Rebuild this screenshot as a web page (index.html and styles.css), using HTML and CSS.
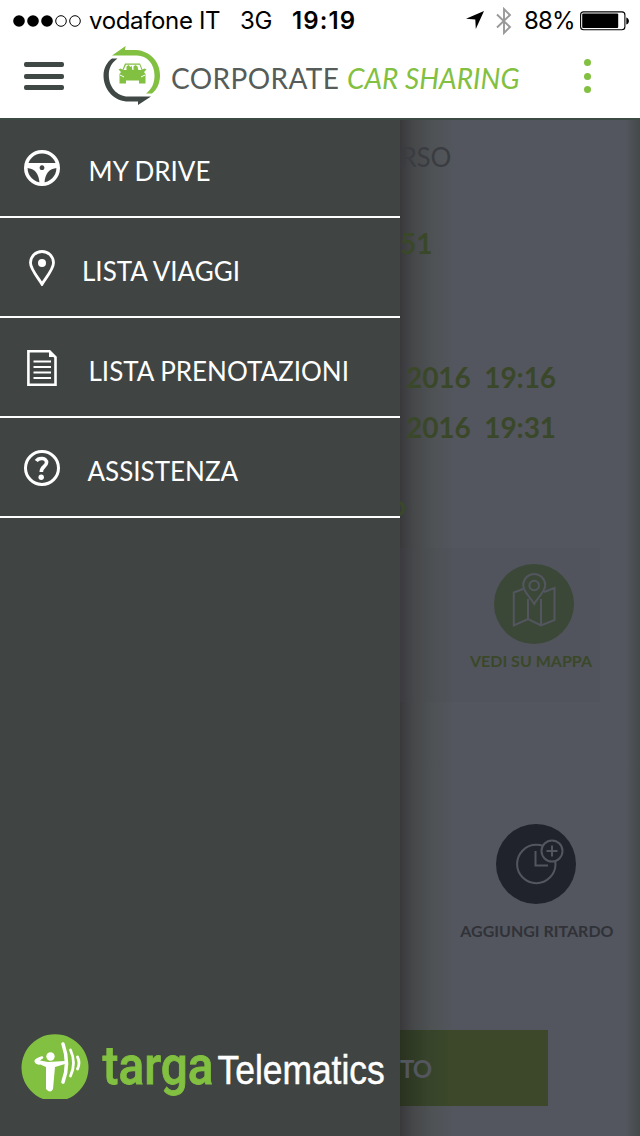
FILE: index.html
```html
<!DOCTYPE html>
<html lang="it">
<head>
    <meta charset="UTF-8">
    <meta name="viewport" content="width=device-width, initial-scale=1.0">
    <title>Corporate Car Sharing</title>
    <link rel="stylesheet" href="styles.css">
</head>
<body>

    <div class="status-bar">
        <svg class="signal" width="68" height="14" viewBox="0 0 68 14">
            <circle cx="6" cy="7" r="5.8"/>
            <circle cx="20" cy="7" r="5.8"/>
            <circle cx="34" cy="7" r="5.8"/>
            <circle cx="48" cy="7" r="5.3" fill="none" stroke="#000"/>
            <circle cx="62" cy="7" r="5.3" fill="none" stroke="#000"/>
        </svg>
        <span class="carrier">vodafone IT</span>
        <span class="network">3G</span>
        <span class="clock">19:19</span>
        <svg class="location" width="18" height="19" viewBox="0 0 18 19">
            <path d="M18 0L9.8 18L9.3 8.4L0 7.7Z"/>
        </svg>
        <svg class="bluetooth" width="16" height="28" viewBox="0 0 16 28">
            <path d="M1 7.5L14 20L8 26V2L14 8L1 20.5" fill="none" stroke="#999" stroke-width="1.9"/>
        </svg>
        <span class="percent">88%</span>
        <svg class="battery" width="50" height="20" viewBox="0 0 50 20">
            <rect x="0.6" y="0.9" width="44.3" height="17.8" rx="3" fill="none" stroke="#000" stroke-width="1.1"/>
            <rect x="2.2" y="2.6" width="36" height="14.4" rx="1"/>
            <path d="M46.3 6.5c3.5 1 3.5 6 0 7z"/>
        </svg>
    </div>

    <header class="top-bar">
        <div class="hamburger"><i></i><i></i><i></i></div>
        <svg class="brand-logo" width="58" height="60" viewBox="0 0 58 60">
            <path d="M9 9.5L22.6 0L22 4H33C48 5 57.500 17 57 30C56.800 38 53.500 44 49 47.500H43C49 43 51.500 37 51.500 29.500C51.500 18 44 9.500 34 9.500Z" fill="#82c041"/>
            <path d="M48 50.500L35 59V55.500H23C10 54 0.500 43 0.500 29.500C0.500 22 4.500 15.500 9 12.500H14.500C8.500 17 5.800 22 5.800 29C5.800 41 14 50.500 25 50.500Z" fill="#404845"/>
            <path d="M22 17.500H37L39.500 23.500 41.500 22.500 43.500 23.500 41 26 42.500 28V37.500H36V34.500H23V37.500H16.500V28L18 26 15.500 23.500 17.500 22.500 19.500 23.500Z" fill="#82c041"/>
            <path d="M23 18.700H36.500L38.500 24H20.500Z" fill="#fff"/>
            <path d="M23.500 24.500V20.500L25.500 19L27.500 21L28.500 19.500L29.500 24.500ZM30.500 24.500V20.500L32.500 19L34.500 20.500L35.500 24.500Z" fill="#82c041"/>
            <path d="M17 29L21 31M42 29L38 31" stroke="#fff"/>
        </svg>
        <h1 class="brand">CORPORATE <em>CAR SHARING</em></h1>
        <div class="more"><i></i><i></i><i></i></div>
    </header>

    <div class="screen">
        <nav class="drawer">
            <ul class="menu">
                <li class="menu-item">
                    <svg width="36" height="36" viewBox="0 0 36 36">
                        <circle cx="18" cy="18" r="16.200" fill="none" stroke="#fff" stroke-width="3.600"/>
                        <path fill="#fff" fill-rule="evenodd" d="M3 13H33V18C25 18.500 21 24 20.500 33H15.500C15 24 11 18.500 3 18ZM18 15.300a2.400 2.400 0 1 0 0.010 0Z"/>
                    </svg>
                    <span class="drive">MY DRIVE</span>
                </li>
                <li class="menu-item">
                    <svg width="36" height="36" viewBox="0 0 36 36">
                        <path d="M18 34.200C14.500 28 6.500 19.500 6.500 12.800A11.500 11.300 0 0 1 29.500 12.800C29.500 19.500 21.500 28 18 34.200Z" fill="none" stroke="#fff" stroke-width="2.800"/>
                        <circle cx="18" cy="13" r="4" fill="#fff"/>
                    </svg>
                    <span class="trips">LISTA VIAGGI</span>
                </li>
                <li class="menu-item">
                    <svg width="36" height="36" viewBox="0 0 36 36">
                        <path d="M4.400 1.300H25.500L31.500 7.200V34.700H4.400Z" fill="none" stroke="#fff" stroke-width="2.600"/>
                        <path d="M25 1V7H32" fill="#fff"/>
                        <path d="M9.500 11.500H27M9.500 17H27M9.500 22.500H27M9.500 28H27" stroke="#fff" stroke-width="2"/>
                    </svg>
                    <span class="bookings">LISTA PRENOTAZIONI</span>
                </li>
                <li class="menu-item">
                    <svg width="36" height="36" viewBox="0 0 36 36">
                        <circle cx="18" cy="18" r="16.500" fill="none" stroke="#fff" stroke-width="3"/>
                        <path d="M12.300 11C14.500 7.500 23 7.300 22.500 12.800C22.200 16.500 17.300 16.500 17.300 22" fill="none" stroke="#fff" stroke-width="3.600"/>
                        <circle cx="17.200" cy="27.200" r="2.700" fill="#fff"/>
                    </svg>
                    <span class="help">ASSISTENZA</span>
                </li>
            </ul>

            <svg class="targa" width="370" height="76" viewBox="0 0 370 76">
                <!-- the disc is cut flat at the bottom -->
                <path d="M22 69A33.500 33.500 0 1 1 46 69Z" fill="#82c041"/>
                <circle cx="29.500" cy="26.500" r="4.200" fill="#fff"/>
                <path d="M22 28L16 30Q14 31.500 17 33.500L25 37V59Q29.500 64 32 59L34 37L44 34V31L27 32L19 30.500" fill="#fff"/>
                <path d="M21 27.500Q10 31 18 33.500" fill="none" stroke="#fff" stroke-width="2.500" stroke-linecap="round"/>
                <path d="M42 14Q49 34 42 52" fill="none" stroke="#fff" stroke-width="3.500" stroke-linecap="round"/>
                <path d="M49.500 20Q55.500 33 49.500 46M56.500 27Q59.500 33 56.500 39" fill="none" stroke="#fff" stroke-width="2.800" stroke-linecap="round"/>
                <text class="targa-name" x="81.500" y="54" textLength="111" lengthAdjust="spacingAndGlyphs">targa</text>
                <text class="targa-sub" transform="translate(196.500 54) scale(0.885 1)">Telematics</text>
            </svg>
        </nav>

        <main class="booking">
            <p class="heading">RSO</p>
            <p class="code">51</p>
            <p class="date start">2016 <span>19:16</span></p>
            <p class="date end">2016 <span>19:31</span></p>
            <p class="place">o</p>

            <section class="map-panel">
                <svg width="80" height="80" viewBox="0 0 80 80">
                    <circle cx="40" cy="40" r="40" fill="#3b4837"/>
                    <g fill="none" stroke="#53565e" stroke-width="2">
                        <path d="M29 25L19.800 28.500V61.500L34 55L47 61.500L60.500 56V24L50 28M34 35V55M47 35V61.500"/>
                        <path d="M40.200 40C36.500 33 29.200 28 29.200 21A11 11 0 0 1 51.200 21C51.200 28 44 33 40.200 40Z"/>
                        <circle cx="40.200" cy="21.500" r="4.800"/>
                    </g>
                </svg>
                <span class="map-label">VEDI SU MAPPA</span>
            </section>

            <section class="delay">
                <svg width="80" height="80" viewBox="0 0 80 80">
                    <circle cx="40" cy="40" r="40" fill="#20232c"/>
                    <g fill="none" stroke="#53565e" stroke-width="2">
                        <circle cx="40.300" cy="40" r="19.200"/>
                        <path d="M39.500 27V41.500H52"/>
                        <circle cx="56" cy="27" r="10.500" fill="#20232c"/>
                        <path d="M50.500 27H61.500M56 21.500V32.500"/>
                    </g>
                </svg>
                <span class="delay-label">AGGIUNGI RITARDO</span>
            </section>

            <div class="button">TO</div>
        </main>
    </div>

</body>
</html>
```
FILE: styles.css
```css
* {
    box-sizing: border-box;
}

body {
    margin: 0;
    width: 640px;
    height: 1136px;
    overflow: hidden;
    background-color: #fff;
    font-family: Lato, "Liberation Sans", sans-serif;
}

p, h1, ul {
    margin: 0;
    padding: 0;
}

svg {
    display: block;
    flex-shrink: 0;
}

/* Status bar */
.status-bar {
    display: flex;
    align-items: center;
    height: 41px;
    padding-left: 13px;
    font: 24px/30px Inter, sans-serif;
    color: #000;
    white-space: nowrap;
}

.carrier {
    width: 143px;
    margin-left: 8px;
    letter-spacing: -0.35px;
}

.network {
    width: 52px;
    margin-left: 8px;
    letter-spacing: -0.3px;
}

.clock {
    width: 173px;
    font-weight: 600;
    letter-spacing: 1.1px;
}

.location {
    margin-left: 1px;
}

.bluetooth {
    margin-left: 12px;
}

.percent {
    width: 56px;
    margin-left: 12px;
    letter-spacing: -0.8px;
}

/* Header */
.top-bar {
    display: flex;
    align-items: flex-start;
    height: 79px;
    padding: 5px 49px 0 24px;
    border-bottom: 2px solid #3b4a42;
}

.hamburger {
    display: grid;
    gap: 6.5px;
    width: 40px;
    margin-top: 16px;
}

.hamburger i {
    height: 5px;
    border-radius: 2px;
    background-color: #404845;
}

.brand-logo {
    margin-left: 39px;
}

.brand {
    flex: 1;
    margin: 15px 0 0 10px;
    font-size: 28px;
    font-weight: 400;
    line-height: 34px;
    letter-spacing: 0.4px;
    color: #555c59;
    white-space: nowrap;
}

.brand em {
    letter-spacing: 0;
    color: #82c041;
}

.more {
    display: grid;
    gap: 6.5px;
    margin-top: 13px;
}

.more i {
    width: 7px;
    height: 7px;
    border-radius: 50%;
    background-color: #82c041;
}

/* Drawer and page behind it */
.screen {
    display: grid;
    grid-template-columns: 400px 240px;
    height: 1016px;
}

.drawer {
    display: flex;
    flex-direction: column;
    justify-content: space-between;
    background-color: #404543;
}

.menu {
    list-style: none;
}

.menu-item {
    display: flex;
    align-items: center;
    height: 100px;
    padding: 2px 0 0 24px;
    border-bottom: 2px solid #fff;
    font-size: 26px;
    line-height: 32px;
    color: #fff;
    white-space: nowrap;
}

.menu-item:first-child {
    height: 98px;
    padding-top: 0;
}

.menu-item span {
    margin: 5px 0 0 28.5px;
}

.menu-item .trips {
    margin-left: 22px;
}

.menu-item .help {
    margin-left: 27.5px;
}

.targa {
    margin: 0 0 30px 21px;
}

.targa-name {
    font: 500 53px Roboto, sans-serif;
    fill: #82c041;
    stroke: #82c041;
    stroke-width: 0.8px;
}

.targa-sub {
    font: 40px "Liberation Sans", sans-serif;
    fill: #fff;
    stroke: #fff;
    stroke-width: 0.5px;
}

.booking {
    display: flex;
    flex-direction: column;
    padding-top: 17px;
    overflow: hidden;
    background:
        linear-gradient(to right, #39393c, #46484a 14px, #4e5254 32px, transparent 54px),
        linear-gradient(to left, #444949, transparent 14px),
        #53565e;
    font-size: 28px;
    font-weight: 700;
    line-height: 40px;
    color: #3a4829;
    white-space: nowrap;
}

.heading {
    padding-left: 0.5px;
    font-size: 26px;
    font-weight: 400;
    letter-spacing: -0.2px;
    color: #3a3c41;
}

.code {
    margin-top: 46px;
}

.date {
    padding-left: 6px;
    letter-spacing: -0.1px;
}

.date span {
    margin-left: 7px;
}

.start {
    margin-top: 94px;
}

.end {
    margin-top: 10px;
}

.place {
    margin-top: 38px;
    text-indent: -10px;
}

.map-panel {
    display: flex;
    flex-direction: column;
    align-items: flex-end;
    width: 200px;
    height: 154px;
    margin-top: 23px;
    padding: 16px 8px 0 0;
    background-color: rgba(72, 75, 78, 0.15);
    font-size: 16px;
    line-height: 20px;
}

.map-panel svg {
    margin-right: 18px;
}

.map-label {
    margin-top: 7px;
}

.delay {
    display: flex;
    flex-direction: column;
    align-items: flex-end;
    margin-top: 122px;
    padding-right: 26.5px;
    font-size: 16px;
    line-height: 20px;
    color: #303238;
}

.delay svg {
    margin-right: 37.5px;
}

.delay-label {
    margin-top: 17px;
}

.button {
    width: 148px;
    height: 76px;
    margin-top: 89px;
    padding-top: 19px;
    background: linear-gradient(to right, #29321f, #37432a 28px, #3c4829 50px);
    font-size: 24px;
    letter-spacing: -1px;
    color: #53565e;
}
```
